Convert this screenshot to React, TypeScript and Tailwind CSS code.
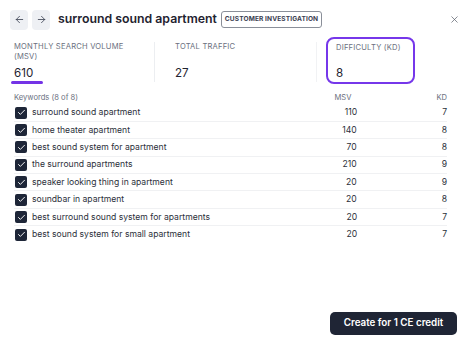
import { X, ArrowLeft, ArrowRight, Check } from "lucide-react";

type Keyword = { name: string; msv: number; kd: number };

const keywords: Keyword[] = [
  { name: "surround sound apartment", msv: 110, kd: 7 },
  { name: "home theater apartment", msv: 140, kd: 8 },
  { name: "best sound system for apartment", msv: 70, kd: 8 },
  { name: "the surround apartments", msv: 210, kd: 9 },
  { name: "speaker looking thing in apartment", msv: 20, kd: 9 },
  { name: "soundbar in apartment", msv: 20, kd: 8 },
  { name: "best surround sound system for apartments", msv: 20, kd: 7 },
  { name: "best sound system for small apartment", msv: 20, kd: 7 },
];

export default function App() {
  return (
    <div
      className="w-[474px] h-[353px] bg-white text-[#1f2330] flex flex-col"
      style={{ fontFamily: "Inter, 'Noto Sans', sans-serif" }}
    >
      {/* header */}
      <div className="flex items-center h-[38px] pl-[10px] pr-[14px] pt-[1px]">
        <button className="w-[18px] h-[20px] rounded-[4px] bg-[#eef0f4] flex items-center justify-center text-[#3b4152]">
          <ArrowLeft size={11} strokeWidth={1.8} />
        </button>
        <button className="ml-[4px] w-[18px] h-[20px] rounded-[4px] bg-[#eef0f4] flex items-center justify-center text-[#3b4152]">
          <ArrowRight size={11} strokeWidth={1.8} />
        </button>
        <div className="ml-[8px] text-[12.3px] font-semibold">surround sound apartment</div>
        <div className="ml-[4px] h-[17px] px-[3px] border border-[#8a8f99] rounded-[3px] flex items-center text-[6.6px] font-bold text-[#3b4152] tracking-[0.1px]">
          CUSTOMER INVESTIGATION
        </div>
        <X className="ml-auto text-[#555a66]" size={11} strokeWidth={1.5} />
      </div>

      {/* metrics */}
      <div className="flex h-[48px]">
        <div className="w-[155px] pl-[14px] my-[4px] border-r border-[#eceef1] flex flex-col">
          <div className="text-[7.6px] leading-[10px] text-[#6b7080] tracking-[0.2px]">
            MONTHLY SEARCH VOLUME
            <br />
            (MSV)
          </div>
          <div className="relative mt-[4px] text-[11.6px] leading-[14px]">
            610
            <div className="absolute left-[-3px] top-[15px] w-[32px] h-[2.5px] rounded-full bg-[#7433e6]" />
          </div>
        </div>
        <div className="w-[162px] pl-[20px] my-[4px] border-r border-[#f1f2f4] flex flex-col">
          <div className="text-[7.6px] leading-[10px] text-[#6b7080] tracking-[0.2px]">TOTAL TRAFFIC</div>
          <div className="mt-[14px] text-[11.6px] leading-[14px]">27</div>
        </div>
        <div className="ml-[9px] -mt-[1px] w-[89px] h-[47px] border-[2.5px] border-[#7637ea] rounded-[8px] pl-[8px] pt-[3.5px] flex flex-col">
          <div className="text-[7.6px] leading-[10px] text-[#6b7080] tracking-[0.2px]">DIFFICULTY (KD)</div>
          <div className="mt-[13px] text-[11.6px] leading-[14px]">8</div>
        </div>
      </div>

      {/* keyword table */}
      <div className="pl-[14px] pr-[27px] mt-[4.5px]">
        <div className="flex items-center h-[14px] text-[7.6px] text-[#6b7080]">
          <div className="flex-1">Keywords (8 of 8)</div>
          <div className="w-[40px] text-right mr-[85px]">MSV</div>
          <div className="text-right">KD</div>
        </div>
        {keywords.map((k, i) => (
          <div
            key={k.name}
            className={`flex items-center h-[17.4px] text-[8.6px] text-[#2b2f3a] ${
              i < keywords.length - 1 ? "border-b border-[#f0f1f3]" : ""
            }`}
          >
            <div className="w-[12px] h-[12px] ml-[1px] rounded-[2px] bg-[#1e2638] flex items-center justify-center text-white">
              <Check size={9} strokeWidth={2.5} />
            </div>
            <div className="ml-[5px] flex-1">{k.name}</div>
            <div className="w-[40px] text-right mr-[85px]">{k.msv}</div>
            <div className="text-right">{k.kd}</div>
          </div>
        ))}
      </div>

      {/* footer */}
      <div className="mt-auto flex justify-end pr-[17px] pb-[18px]">
        <button className="w-[127px] h-[23px] rounded-[5px] bg-[#1f2535] text-white text-[9.8px] font-semibold">
          Create for 1 CE credit
        </button>
      </div>
    </div>
  );
}
